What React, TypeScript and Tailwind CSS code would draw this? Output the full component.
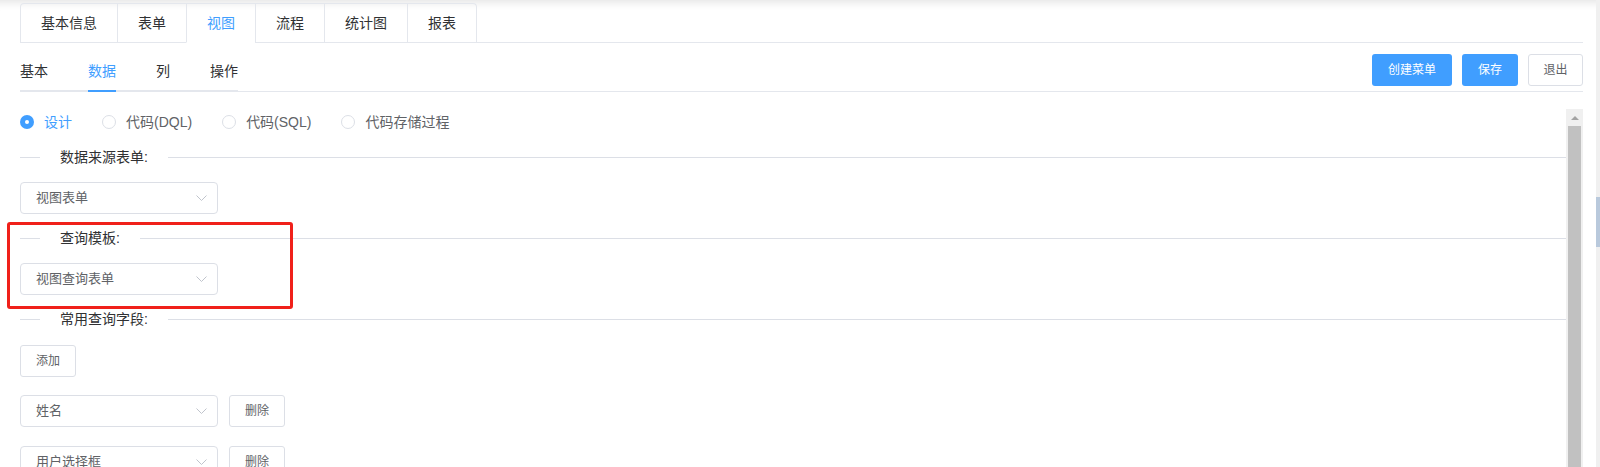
const mainTabs = ["基本信息", "表单", "视图", "流程", "统计图", "报表"];
const subTabs = ["基本", "数据", "列", "操作"];
const radios = ["设计", "代码(DQL)", "代码(SQL)", "代码存储过程"];

function Chevron() {
  return (
    <svg width="11" height="6" viewBox="0 0 11 6" fill="none">
      <path d="M0.5 0.5 L5.5 5.5 L10.5 0.5" stroke="#C0C4CC" strokeWidth="1" />
    </svg>
  );
}

function Select({ value }: { value: string }) {
  return (
    <div className="w-[198px] h-8 border border-[#DCDFE6] rounded-[4px] pl-[15px] pr-[10px] flex items-center justify-between text-[13px] text-[#606266] bg-white">
      <span>{value}</span>
      <Chevron />
    </div>
  );
}

function Divider({ label }: { label: string }) {
  return (
    <div className="h-5 flex items-center">
      <div className="w-5 h-px bg-[#DCDFE6]" />
      <span className="px-5 text-sm text-[#303133]">{label}</span>
      <div className="flex-1 h-px bg-[#DCDFE6]" />
    </div>
  );
}

function PlainButton({ children, className = "" }: { children: React.ReactNode; className?: string }) {
  return (
    <button className={`w-14 h-8 border border-[#DCDFE6] rounded-[3px] bg-white text-xs text-[#606266] flex items-center justify-center ${className}`}>
      {children}
    </button>
  );
}

export default function App() {
  return (
    <div className="relative w-full h-[467px] overflow-hidden bg-white flex font-['Liberation_Sans','Noto_Sans_CJK_SC',sans-serif]">
      <div className="flex-1 pl-5 pr-[13px] pt-[3px] flex flex-col shadow-[inset_0_12px_10px_-10px_rgba(0,0,0,0.12)]">
        {/* top tabs */}
        <div className="flex border-b border-[#E4E7ED]">
          <div className="flex border border-b-0 border-[#E4E7ED] rounded-t-[4px] -mb-px">
            {mainTabs.map((t) => (
              <div
                key={t}
                className={`h-[39px] px-5 flex items-center text-sm border-l first:border-l-0 border-l-[#E4E7ED] border-b ${
                  t === "视图" ? "text-[#409EFF] border-b-white" : "text-[#303133] border-b-[#E4E7ED]"
                }`}
              >
                {t}
              </div>
            ))}
          </div>
        </div>

        {/* sub tabs + actions */}
        <div className="mt-2 flex items-center justify-between border-b border-[#E4E7ED]">
          <div className="flex h-[41px] -mb-px border-b-2 border-[#E4E7ED]">
            {subTabs.map((t) => (
              <div
                key={t}
                className={`relative h-full px-5 first:pl-0 last:pr-0 flex items-center text-sm ${
                  t === "数据" ? "text-[#409EFF]" : "text-[#303133]"
                }`}
              >
                {t}
                {t === "数据" && <span className="absolute left-5 right-5 bottom-[-2px] h-[2px] bg-[#409EFF]" />}
              </div>
            ))}
          </div>
          <div className="flex items-center gap-[10px] -mt-[3px]">
            <button className="w-20 h-8 rounded-[3px] bg-[#409EFF] text-white text-xs">创建菜单</button>
            <button className="w-14 h-8 rounded-[3px] bg-[#409EFF] text-white text-xs">保存</button>
            <PlainButton className="w-[55px]">退出</PlainButton>
          </div>
        </div>

        {/* body */}
        <div className="flex-1 flex min-h-0">
          <div className="flex-1 flex flex-col">
            <div className="mt-[22px] h-4 flex items-center">
              {radios.map((r, i) => (
                <label key={r} className="mr-[30px] flex items-center">
                  {i === 0 ? (
                    <span className="w-[14px] h-[14px] rounded-full bg-[#409EFF] flex items-center justify-center">
                      <span className="w-1 h-1 rounded-full bg-white" />
                    </span>
                  ) : (
                    <span className="w-[14px] h-[14px] rounded-full border border-[#DCDFE6] bg-white" />
                  )}
                  <span className={`pl-[10px] text-sm ${i === 0 ? "text-[#409EFF]" : "text-[#606266]"}`}>{r}</span>
                </label>
              ))}
            </div>

            <div className="mt-[17px]">
              <Divider label="数据来源表单:" />
            </div>
            <div className="mt-[15px]">
              <Select value="视图表单" />
            </div>

            <div className="mt-[14px]">
              <Divider label="查询模板:" />
            </div>
            <div className="mt-[15px]">
              <Select value="视图查询表单" />
            </div>

            <div className="mt-[14px]">
              <Divider label="常用查询字段:" />
            </div>
            <div className="mt-4">
              <PlainButton>添加</PlainButton>
            </div>

            <div className="mt-[18px] flex items-center gap-[11px]">
              <Select value="姓名" />
              <PlainButton>删除</PlainButton>
            </div>
            <div className="mt-[19px] flex items-center gap-[11px]">
              <Select value="用户选择框" />
              <PlainButton>删除</PlainButton>
            </div>
          </div>

          {/* inner scrollbar */}
          <div className="mt-[17px] w-[17px] bg-[#F0F0F0] flex flex-col">
            <div className="h-[17px] flex items-center justify-center">
              <svg width="8" height="4" viewBox="0 0 8 4">
                <path d="M0 4 L4 0 L8 4 Z" fill="#A3A3A3" />
              </svg>
            </div>
            <div className="flex-1 mx-[2px] bg-[#C1C1C1]" />
          </div>
        </div>
      </div>

      {/* page scrollbar edge */}
      <div className="w-1 bg-[#F0F0F0] flex flex-col">
        <div className="mt-[197px] h-[50px] bg-[#B9C9DC]" />
      </div>

      {/* annotation */}
      <div className="pointer-events-none absolute left-[7px] top-[222px] w-[286px] h-[87px] border-[3px] border-[#F0201A] rounded-[3px]" />
    </div>
  );
}
